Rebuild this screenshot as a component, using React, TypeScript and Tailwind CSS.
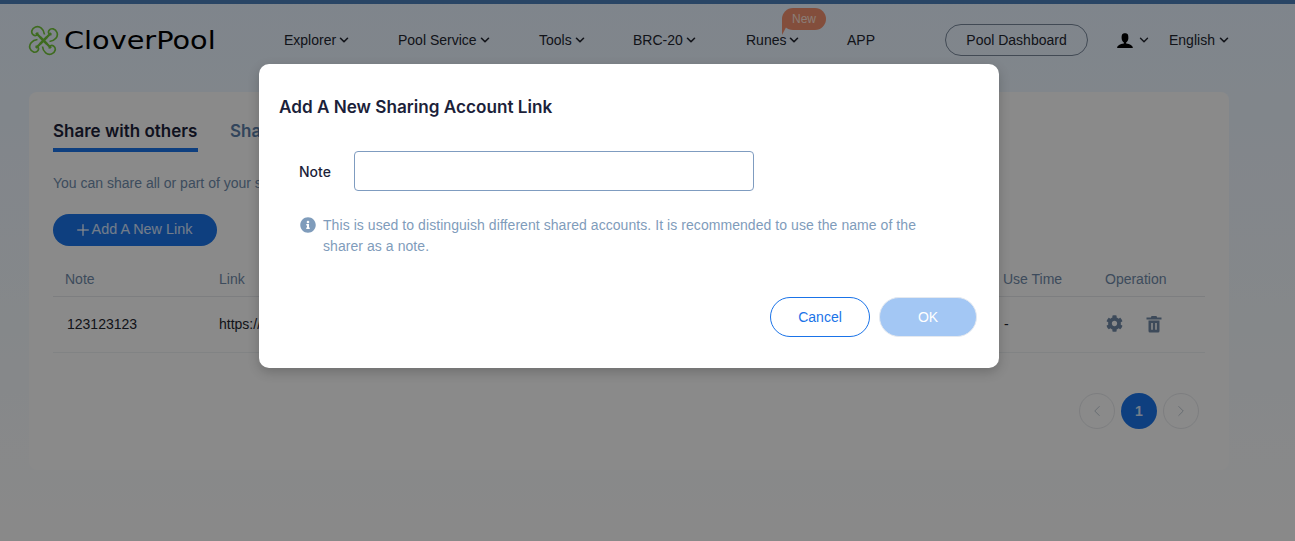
import { ChevronDown, ChevronLeft, ChevronRight, Plus } from "lucide-react"
import { FaCog, FaInfoCircle } from "react-icons/fa"
import { ImUser } from "react-icons/im"

const navItems = [
  { label: "Explorer", width: "w-[114px]" },
  { label: "Pool Service", width: "w-[141px]" },
  { label: "Tools", width: "w-[94px]" },
  { label: "BRC-20", width: "w-[113px]" },
  { label: "Runes", width: "w-[101px]", badge: true },
]

function CloverLogo() {
  return (
    <svg width="31" height="31" viewBox="0 0 31 31" fill="none" stroke="#72c43a" strokeWidth="1.7" className="shrink-0">
      {[0, 90, 180, 270].map((angle) => (
        <g key={angle} transform={`rotate(${angle} 15.5 15.500)`}>
          <path d="M19 19 L8 8" strokeWidth="2.400" />
          <path d="M16.500 9.500 C16 4 11.500 0.500 7.500 2 C3.500 3.500 2.500 8 5.500 10 C7.500 11.300 10 10 9.500 7.500" />
        </g>
      ))}
    </svg>
  )
}

function Navbar() {
  return (
    <nav className="flex h-[72px] items-center pl-[28px] text-[14px] text-[#22252f]">
      {/* Logo */}
      <div className="flex w-[256px] shrink-0 items-center">
        <CloverLogo />
        <span className="ml-[5px] origin-left scale-x-[1.15] font-['DejaVu_Sans'] text-[25px] leading-none text-black">CloverPool</span>
      </div>

      {navItems.map((item) => (
        <div key={item.label} className={`relative flex shrink-0 items-center ${item.width}`}>
          {item.label}
          <ChevronDown size={14} strokeWidth={2.8} className="ml-[1px]" />
          {item.badge && (
            <span className="absolute left-[36px] -top-[22px] h-[22px] w-[44px] rounded-[11px] bg-[#ef8f6e] text-center text-[12px] leading-[22px] text-[#fde3d9]">
              New
              <span className="absolute left-0 top-[10px] border-t-[17px] border-r-[9px] border-t-[#ef8f6e] border-r-transparent" />
            </span>
          )}
        </div>
      ))}
      <div className="w-[98px] shrink-0">APP</div>

      <button className="h-[32px] w-[143px] shrink-0 rounded-full border border-[#2c3e57]/60 text-center">Pool Dashboard</button>

      <div className="ml-[28px] flex w-[53px] shrink-0 items-center">
        <ImUser size={18} className="text-black" />
        <ChevronDown size={14} strokeWidth={2.4} className="ml-[3px]" />
      </div>
      <div className="flex items-center">
        English
        <ChevronDown size={14} strokeWidth={2.8} className="ml-[2px]" />
      </div>
    </nav>
  )
}

function ShareCard() {
  return (
    <section className="ml-[29px] mt-[16px] h-[378px] w-[1200px] rounded-[8px] bg-[#fbfbfb] px-[24px] pt-[28px]">
      <div className="flex gap-[32px] font-['Inter'] text-[17px] font-semibold leading-[22px]">
        <div className="h-[32px] w-[145px] whitespace-nowrap border-b-[4px] border-[#1a73e8] text-[#1c1f3a]">Share with others</div>
        <div className="text-[#5b7ea8]">Shared with me</div>
      </div>
      <p className="mt-[23px] text-[14px] leading-[16px] text-[#6f8bab]">You can share all or part of your sub</p>

      <button className="mt-[23px] flex h-[32px] w-[164px] items-center justify-center rounded-full bg-[#1a73e8] pr-[4px] text-[14.400px] text-white/80">
        <Plus size={18} strokeWidth={2} />
        Add A New Link
      </button>

      {/* Table */}
      <div className="mt-[17px] flex h-[34px] items-center border-b border-[#e4e6e9] text-[14px] text-[#6f89a8]">
        <span className="w-[166px] pl-[12px]">Note</span>
        <span className="w-[784px]">Link</span>
        <span className="w-[102px]">Use Time</span>
        <span>Operation</span>
      </div>
      <div className="flex h-[56px] items-center border-b border-[#eceef0] text-[14px] text-[#22252f]">
        <span className="w-[166px] pl-[14px]">123123123</span>
        <span className="w-[785px]">https://</span>
        <span className="w-[102px]">-</span>
        <FaCog size={17} className="-mt-[2px] text-[#7088a5]" />
        <svg width="16" height="18" viewBox="0 0 16 18" className="-mt-[2px] ml-[23px] text-[#7088a5]" fill="currentColor">
          <path d="M5.500 1h5l.6 1.600H15.500v1.800H.5V2.600h4.400zM2.500 5.500h11V16a1.500 1.500 0 0 1-1.500 1.500H4A1.500 1.500 0 0 1 2.500 16zm2.700 2.500v6.800h1.600V8zm4 0v6.800h1.600V8z" />
        </svg>
      </div>

      {/* Pagination */}
      <div className="mr-[6px] mt-[40px] flex justify-end gap-[6px] text-[#b8c2cc]">
        <span className="flex size-[36px] items-center justify-center rounded-full border border-[#e4e6e9]">
          <ChevronLeft size={18} strokeWidth={1.2} />
        </span>
        <span className="flex size-[36px] items-center justify-center rounded-full bg-[#1a73e8] text-[14px] font-semibold text-white/80">1</span>
        <span className="flex size-[36px] items-center justify-center rounded-full border border-[#e4e6e9]">
          <ChevronRight size={18} strokeWidth={1.2} />
        </span>
      </div>
    </section>
  )
}

function SharingModal() {
  return (
    <div className="absolute inset-0 bg-black/45">
      <div className="ml-[259px] mt-[64px] h-[304px] w-[740px] rounded-[10px] bg-white px-[20px] pt-[32px] shadow-[0_4px_12px_rgba(0,0,0,0.2)]">
        <h2 className="font-['Inter'] text-[17.150px] font-semibold leading-[22px] text-[#1c1f3a]">Add A New Sharing Account Link</h2>

        <div className="mt-[33px] flex items-center pl-[20px]">
          <label className="w-[55px] font-['Inter'] text-[14px] font-medium text-[#1c1f3a]">Note</label>
          <input className="h-[40px] w-[400px] rounded-[4px] border border-[#7f9cc0] bg-white outline-none" />
        </div>

        <div className="mt-[24px] flex pl-[21px] text-[14px] leading-[21px] tracking-[0.06px] text-[#7f9cbb]">
          <FaInfoCircle size={16} className="mt-[2px] shrink-0 text-[#7f9cbb]" />
          <p className="ml-[7px] w-[610px]">
            This is used to distinguish different shared accounts. It is recommended to use the name of the sharer as a note.
          </p>
        </div>

        <div className="mt-[40px] flex justify-end gap-[9px] pr-[2px] text-[14px]">
          <button className="h-[40px] w-[100px] rounded-full border border-[#1a73e8] text-[#1a73e8]">Cancel</button>
          <button className="h-[40px] w-[98px] rounded-full border border-[#e4e9f0] bg-[#a3c7f4] text-white">OK</button>
        </div>
      </div>
    </div>
  )
}

export default function App() {
  return (
    <div className="relative h-[541px] w-[1295px] overflow-hidden bg-gradient-to-b from-[#e8f3ff] to-[#fafafa] font-['Liberation_Sans',sans-serif]">
      <div className="h-[4px] bg-[#4c7fb8]" />
      <Navbar />
      <ShareCard />
      <SharingModal />
    </div>
  )
}
